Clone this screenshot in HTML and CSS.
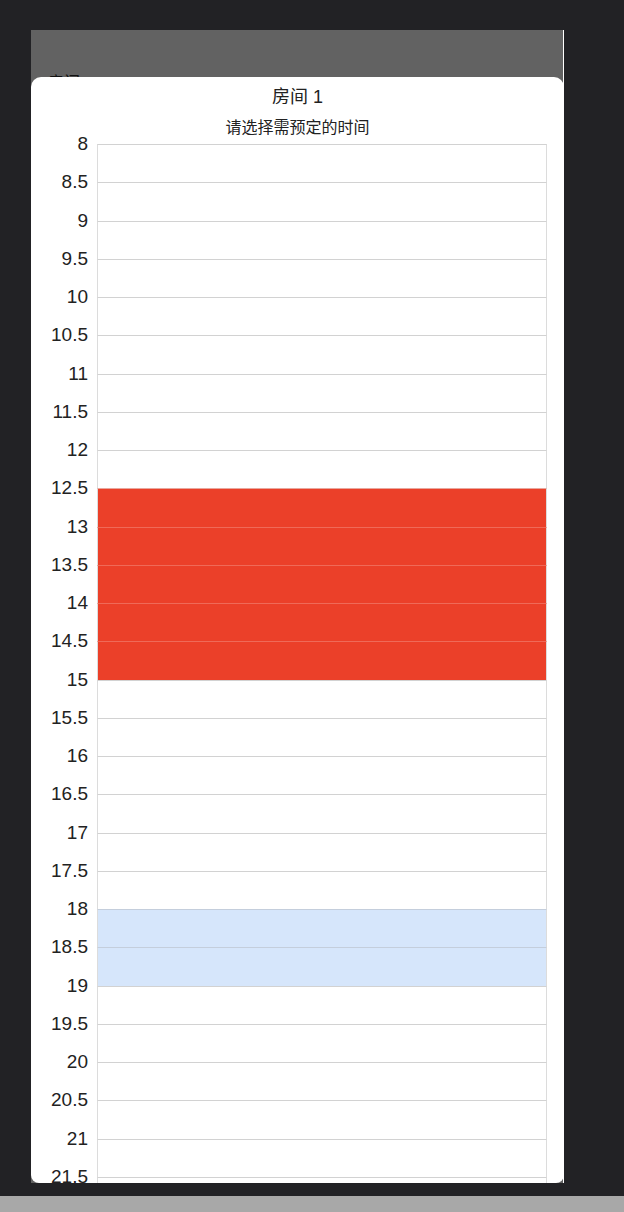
FILE: index.html
```html
<!DOCTYPE html>
<html lang="zh">
<head>
<meta charset="utf-8">
<title>房间 1</title>
<link rel="stylesheet" href="styles.css">
</head>
<body>
<div class="screen">
  <div class="under">房间</div>
  <div class="modal">
    <div class="title">房间 1</div>
    <div class="subtitle">请选择需预定的时间</div>
    <div class="grid">
      <div class="row"><span class="label">8</span><div class="cell"></div></div>
      <div class="row"><span class="label">8.5</span><div class="cell"></div></div>
      <div class="row"><span class="label">9</span><div class="cell"></div></div>
      <div class="row"><span class="label">9.5</span><div class="cell"></div></div>
      <div class="row"><span class="label">10</span><div class="cell"></div></div>
      <div class="row"><span class="label">10.5</span><div class="cell"></div></div>
      <div class="row"><span class="label">11</span><div class="cell"></div></div>
      <div class="row"><span class="label">11.5</span><div class="cell"></div></div>
      <div class="row"><span class="label">12</span><div class="cell"></div></div>
      <div class="row"><span class="label">12.5</span><div class="cell booked first"></div></div>
      <div class="row"><span class="label">13</span><div class="cell booked"></div></div>
      <div class="row"><span class="label">13.5</span><div class="cell booked"></div></div>
      <div class="row"><span class="label">14</span><div class="cell booked"></div></div>
      <div class="row"><span class="label">14.5</span><div class="cell booked"></div></div>
      <div class="row"><span class="label">15</span><div class="cell"></div></div>
      <div class="row"><span class="label">15.5</span><div class="cell"></div></div>
      <div class="row"><span class="label">16</span><div class="cell"></div></div>
      <div class="row"><span class="label">16.5</span><div class="cell"></div></div>
      <div class="row"><span class="label">17</span><div class="cell"></div></div>
      <div class="row"><span class="label">17.5</span><div class="cell"></div></div>
      <div class="row"><span class="label">18</span><div class="cell picked"></div></div>
      <div class="row"><span class="label">18.5</span><div class="cell picked"></div></div>
      <div class="row"><span class="label">19</span><div class="cell"></div></div>
      <div class="row"><span class="label">19.5</span><div class="cell"></div></div>
      <div class="row"><span class="label">20</span><div class="cell"></div></div>
      <div class="row"><span class="label">20.5</span><div class="cell"></div></div>
      <div class="row"><span class="label">21</span><div class="cell"></div></div>
      <div class="row"><span class="label">21.5</span><div class="cell"></div></div>
    </div>
  </div>
</div>
<div class="bottombar"></div>
</body>
</html>
```

FILE: styles.css
```css
html, body {
  margin: 0;
  padding: 0;
  background: #222225;
  width: 624px;
  height: 1212px;
  overflow: hidden;
  font-family: "Liberation Sans", "Noto Sans CJK SC", sans-serif;
}

.screen {
  position: relative;
  margin: 30px 0 0 31px;
  width: 533px;
  height: 1153px;
  background: #626262;
  border-right: 1px solid #ffffff;
  padding: 41px 0 0 17px;
  box-sizing: border-box;
}

.under {
  font-size: 16px;
  line-height: 20px;
  color: #111;
  font-family: "Noto Sans CJK SC", sans-serif;
}

.modal {
  position: absolute;
  left: 0;
  top: 47px;
  width: 533px;
  bottom: 0;
  background: #ffffff;
  border-radius: 10px 10px 8px 8px;
  overflow: hidden;
  padding-top: 8px;
  box-sizing: border-box;
}

.title {
  text-align: center;
  font-size: 18px;
  line-height: 24px;
  color: #222;
  font-family: "Liberation Sans", "Noto Sans CJK SC", sans-serif;
}

.subtitle {
  text-align: center;
  font-size: 16px;
  line-height: 18px;
  margin-top: 8px;
  color: #222;
  font-family: "Noto Sans CJK SC", sans-serif;
}

.grid {
  margin-top: 9px;
  display: flex;
  flex-direction: column;
}

.row {
  display: flex;
  gap: 9px;
  height: 38.26px;
  flex: none;
}

.label {
  width: 57px;
  text-align: right;
  font-size: 19px;
  line-height: 22px;
  margin-top: -11px;
  height: 22px;
  color: #222;
}

.cell {
  width: 450px;
  box-sizing: border-box;
  border-top: 1px solid #d2d2d2;
  border-left: 1px solid #dcdcdc;
  border-right: 1px solid #dcdcdc;
}

.cell.booked {
  background: #eb4029;
  border-top-color: #ef6a58;
}

.cell.booked.first {
  border-top-color: #e8a79e;
}

.cell.picked {
  background: #d6e6fb;
  border-top-color: #c4cedc;
}

.bottombar {
  margin-top: 13px;
  height: 16px;
  background: #a8a8a8;
}
```
